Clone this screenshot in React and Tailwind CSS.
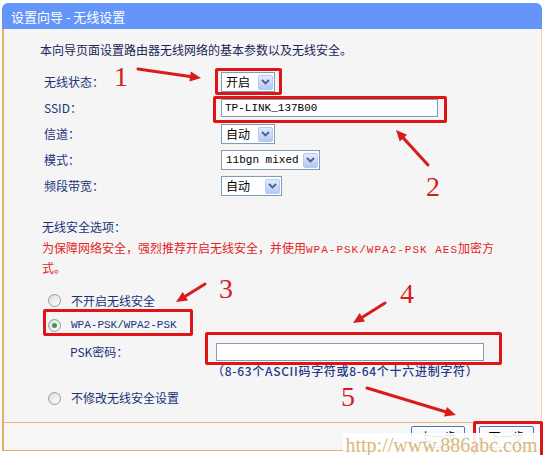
import React from 'react';

const CJK = "font-['Noto_Sans_CJK_SC',sans-serif]";
const MONO = "font-['Liberation_Mono',monospace]";

function Chevron() {
  return (
    <span className="flex h-[15px] w-[15px] shrink-0 items-center justify-center rounded-[2px] border border-[#b7c9f2] bg-linear-to-b from-[#e3ebfe] to-[#b4c8f6]">
      <svg width="9" height="6" viewBox="0 0 9 6">
        <path d="M1 1l3.5 3.5L8 1" stroke="#4a5f8a" strokeWidth="1.8" fill="none" />
      </svg>
    </span>
  );
}

function Select({ value, className = '', mono }) {
  return (
    <div className={`flex h-[20px] items-center justify-between border border-[#7f9db9] bg-white pl-[4px] pr-[1px] ${className}`}>
      <span className={`${mono ? MONO + ' text-[11px]' : CJK + ' text-[12px]'} leading-none text-black`}>{value}</span>
      <Chevron />
    </div>
  );
}

function Radio({ checked }) {
  return (
    <span className="flex h-[13px] w-[13px] shrink-0 items-center justify-center rounded-full border border-[#8c9aab] bg-linear-to-br from-[#dcdcdc] to-white">
      {checked && <span className="h-[5px] w-[5px] rounded-full bg-[#3aa23a]" />}
    </span>
  );
}

function Arrow({ x1, y1, x2, y2 }) {
  const a = Math.atan2(y2 - y1, x2 - x1);
  const L = 11;
  const W = 5;
  const bx = x2 - L * Math.cos(a);
  const by = y2 - L * Math.sin(a);
  const px = -Math.sin(a) * W;
  const py = Math.cos(a) * W;
  return (
    <g>
      <line x1={x1} y1={y1} x2={bx} y2={by} stroke="#d81b1b" strokeWidth="3" strokeLinecap="round" />
      <polygon points={`${x2},${y2} ${bx + px},${by + py} ${bx - px},${by - py}`} fill="#d81b1b" />
    </g>
  );
}

// red step numbers drawn over the form
const NUMS = [
  { n: '1', cls: 'left-[114px] top-[63px]' },
  { n: '2', cls: 'left-[426px] top-[173px]' },
  { n: '3', cls: 'left-[219px] top-[275px]' },
  { n: '4', cls: 'left-[400px] top-[280px]' },
  { n: '5', cls: 'left-[341px] top-[383px]' },
];

const BOXES = [
  'left-[215px] top-[68px] w-[67px] h-[27px]',
  'left-[213px] top-[96px] w-[234px] h-[27px]',
  'left-[43px] top-[309px] w-[150px] h-[27px]',
  'left-[205px] top-[332px] w-[297px] h-[33px]',
  'left-[473px] top-[421px] w-[70px] h-[40px]',
];

export default function App() {
  const label = `${CJK} text-[12px] leading-none text-[#20337a]`;

  return (
    <div className="relative h-[455px] w-[545px] overflow-hidden bg-white pt-[3px]">
      {/* title bar */}
      <div className="ml-[2px] flex h-[26px] w-[540px] items-center rounded-t-[6px] bg-[#6495f8] pl-[9px]">
        <span className={`${CJK} text-[13px] leading-none text-white`}>设置向导 - 无线设置</span>
      </div>

      {/* panel */}
      <div className="ml-[2px] w-[540px] border-b border-l-2 border-r border-[#e9ad68] border-r-[#f1d3ad] bg-[#f5f5f5]">
        <div className="pl-[36px] pt-[11px]">
          <div className={`${CJK} h-[20px] text-[12px] leading-[20px] text-[#1b2456]`}>
            本向导页面设置路由器无线网络的基本参数以及无线安全。
          </div>

          <div className="mt-[9px] pl-[4px]">
            <div className="flex h-[26px] items-center">
              <span className={`${label} w-[177px]`}>无线状态：</span>
              <Select value="开启" className="w-[54px]" />
            </div>
            <div className="flex h-[26px] items-center">
              <span className={`${label} w-[177px]`}>SSID：</span>
              <div className="flex h-[18px] w-[217px] items-center border border-[#7f9db9] bg-white pl-[3px]">
                <span className={`${MONO} text-[11px] leading-none text-black`}>TP-LINK_137B00</span>
              </div>
            </div>
            <div className="flex h-[26px] items-center">
              <span className={`${label} w-[177px]`}>信道：</span>
              <Select value="自动" className="w-[54px]" />
            </div>
            <div className="flex h-[26px] items-center">
              <span className={`${label} w-[177px]`}>模式：</span>
              <Select value="11bgn mixed" mono className="w-[99px]" />
            </div>
            <div className="flex h-[26px] items-center">
              <span className={`${label} w-[177px]`}>频段带宽：</span>
              <Select value="自动" className="w-[61px]" />
            </div>
          </div>

          <div className="mt-[18px] pl-[2px]">
            <div className={`${CJK} h-[20px] text-[12px] leading-[20px] text-[#20337a]`}>无线安全选项：</div>
            <div className={`${CJK} mt-[2px] text-[12px] leading-[18px] text-[#e5231f]`}>
              为保障网络安全，强烈推荐开启无线安全，并使用<span className={`${MONO} text-[11px] tracking-[1px]`}>WPA-PSK/WPA2-PSK AES</span>加密方
              <br />
              式。
            </div>
          </div>

          <div className="mt-[11px] pl-[8px]">
            <div className="flex h-[25px] items-center gap-[6px]">
              <Radio />
              <span className={`${CJK} ml-[4px] text-[12px] leading-none text-[#20337a]`}>不开启无线安全</span>
            </div>
            <div className="flex h-[25px] items-center gap-[6px]">
              <Radio checked />
              <span className={`${MONO} ml-[4px] text-[11px] leading-none text-[#20337a]`}>WPA-PSK/WPA2-PSK</span>
            </div>
            <div className="mt-[4px] flex h-[20px] items-center">
              <span className={`${CJK} w-[168px] pl-[22px] text-[12px] leading-none text-[#20337a]`}>PSK密码：</span>
              <div className="h-[18px] w-[268px] border border-[#7f9db9] bg-white" />
            </div>
            <div className="flex h-[18px] items-center pl-[164px]">
              <span className={`${CJK} text-[12px] font-medium leading-none tracking-[0.7px] text-[#24398a]`}>
                （8-63个ASCII码字符或8-64个十六进制字符）
              </span>
            </div>
            <div className="mt-[8px] flex h-[20px] items-center gap-[6px]">
              <Radio />
              <span className={`${CJK} ml-[4px] text-[12px] leading-none text-[#20337a]`}>不修改无线安全设置</span>
            </div>
          </div>
        </div>

        {/* footer */}
        <div className="mt-[14px] flex h-[28px] items-start justify-end gap-[14px] border-t border-[#e9b77c] bg-[#f6f6f6] pr-[7px] pt-[3px]">
          <button type="button" className={`${CJK} h-[22px] w-[54px] rounded-[2px] border border-[#4d6fc2] bg-linear-to-b from-white to-[#dde6f7] text-[12px] leading-none text-black`}>
            上一步
          </button>
          <button type="button" className={`${CJK} h-[22px] w-[55px] rounded-[2px] border border-[#4d6fc2] bg-linear-to-b from-white to-[#dde6f7] text-[12px] leading-none text-black`}>
            下一步
          </button>
        </div>
      </div>

      {/* annotations */}
      {BOXES.map((b) => (
        <div key={b} className={`pointer-events-none absolute rounded-[2px] border-[3px] border-[#e01414] ${b}`} />
      ))}

      <svg className="pointer-events-none absolute left-0 top-0" width="545" height="455">
        <Arrow x1={138} y1={69} x2={201} y2={78} />
        <Arrow x1={428} y1={165} x2={396} y2={130} />
        <Arrow x1={205} y1={284} x2={176} y2={302} />
        <Arrow x1={385} y1={303} x2={353} y2={323} />
        <Arrow x1={367} y1={388} x2={456} y2={415} />
      </svg>

      {NUMS.map(({ n, cls }) => (
        <span key={n} className={`absolute font-['Liberation_Serif',serif] text-[28px] leading-none text-[#d21f1f] ${cls}`}>
          {n}
        </span>
      ))}

      {/* watermark */}
      <div className="absolute left-[343px] top-[433px] flex h-[24px] w-[197px] items-center justify-center bg-white/90">
        <span className="font-['Liberation_Serif',serif] text-[20px] leading-none text-[#d9b87a]">http://www.886abc.com</span>
      </div>
    </div>
  );
}
